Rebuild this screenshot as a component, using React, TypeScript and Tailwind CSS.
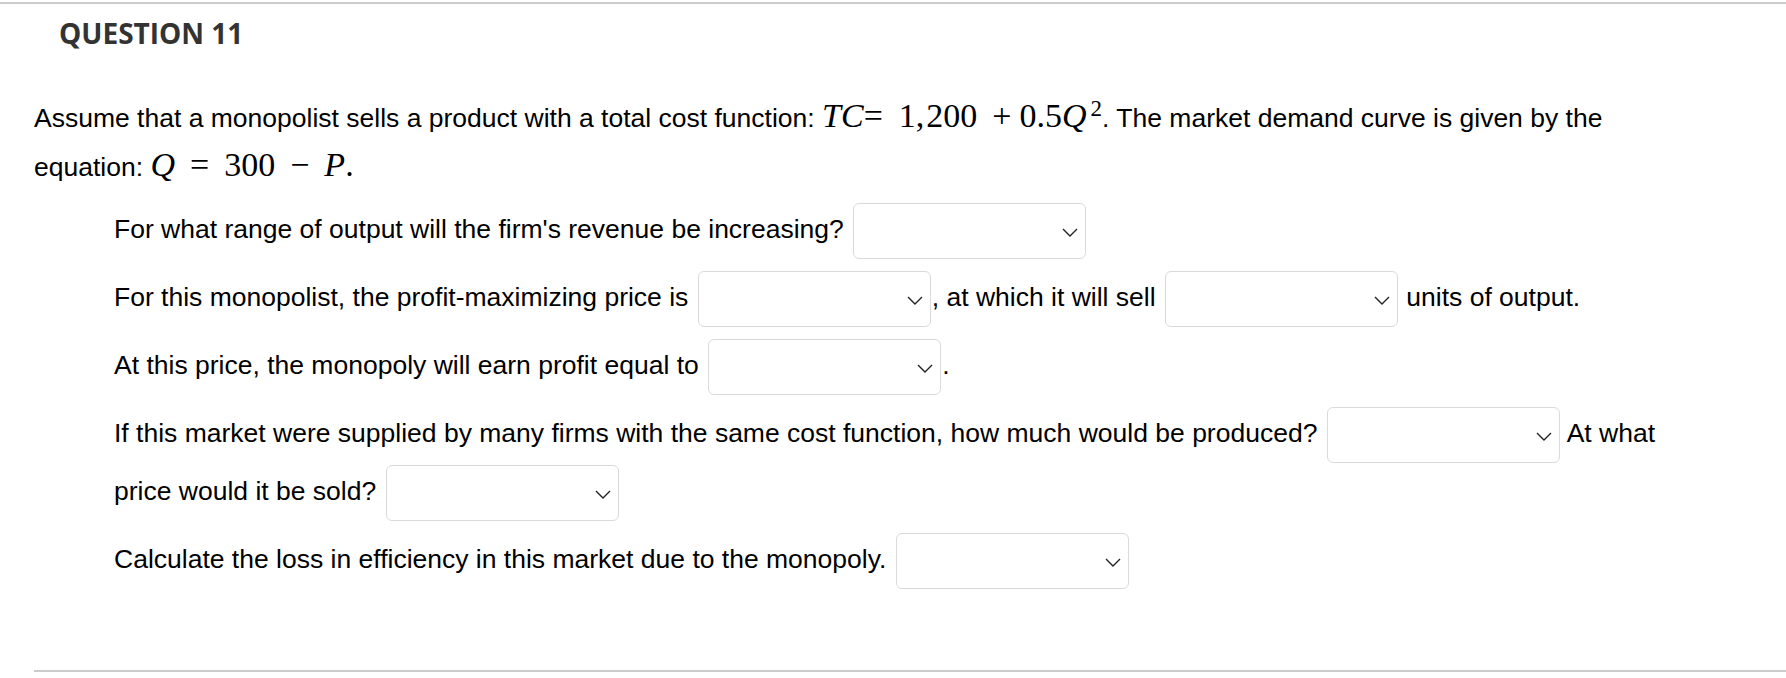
import React from "react";

function Chevron() {
  return (
    <svg width="16" height="9" viewBox="0 0 16 9" fill="none" className="block">
      <polyline points="1,1 8,8 15,1" stroke="#222" strokeWidth="1.4" />
    </svg>
  );
}

function Sel() {
  return (
    <span className="inline-flex align-middle w-[233px] h-[56px] ml-[2px] mr-[1px] border border-[#dadada] rounded-[6px] bg-white items-center justify-end pr-[7px] pt-[2px]">
      <Chevron />
    </span>
  );
}

const serif = "font-['Liberation_Serif','Times_New_Roman',serif] text-[34px] leading-none";

export default function App() {
  return (
    <div className="w-[1786px] h-[678px] bg-white text-black font-['Liberation_Sans',Arial,sans-serif] overflow-hidden">
      <div className="h-[2px] mt-[2px] bg-[#cccccc]" />
      <div className="pl-[34px]">
        <div className="border-b-2 border-[#cccccc] pb-[81px] pr-[96px]">
          <h2 className="ml-[25px] mt-[10px] font-['Open_Sans',sans-serif] font-bold text-[28px] leading-[38px] text-[#333333]">
            QUESTION 11
          </h2>
          <p className="mt-[42px] text-[26.5px] leading-[49px]">
            Assume that a monopolist sells a product with a total cost function:{" "}
            <span className={serif}>
              <i>TC</i>
              <span className="mr-[16px]">=</span>1,<span className="ml-[2px]">200</span>
              <span className="ml-[15px]">+</span>
              <span className="ml-[8px]">0.5</span>
              <i>Q</i>
              <sup className="text-[23px] top-[-11px] ml-[4px]">2</sup>
            </span>
            . The market demand curve is given by the equation:{" "}
            <span className={serif}>
              <i>Q</i>
              <span className="mx-[15px]">=</span>300<span className="mx-[15px]">−</span>
              <i>P</i>.
            </span>
          </p>
          <div className="pl-[80px] text-[26.5px] leading-[57px]">
            <p className="mt-[9px]">
              For what range of output will the firm's revenue be increasing? <Sel />
            </p>
            <p className="mt-[10px]">
              For this monopolist, the profit-maximizing price is <Sel />, at which it will sell <Sel /> units of output.
            </p>
            <p className="mt-[10px]">
              At this price, the monopoly will earn profit equal to <Sel />.
            </p>
            <p className="mt-[10px]">
              If this market were supplied by many firms with the same cost function, how much would be produced? <Sel /> At what price would it be sold? <Sel />
            </p>
            <p className="mt-[10px]">
              Calculate the loss in efficiency in this market due to the monopoly. <Sel />
            </p>
          </div>
        </div>
      </div>
    </div>
  );
}
